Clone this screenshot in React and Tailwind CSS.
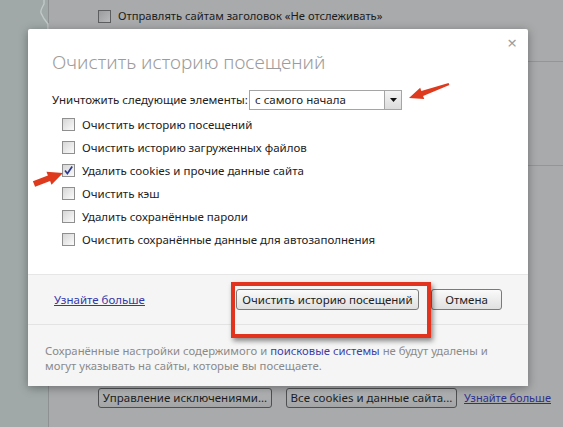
import React from "react";

function Box({ checked, dark }) {
  return (
    <span
      className={`w-[13px] h-[13px] shrink-0 flex items-center justify-center border ${
        dark ? "border-[#5c5e5f] bg-linear-to-br from-[#9a9c9d] to-[#b8babb]" : "border-[#8f8f8f] bg-linear-to-br from-[#d6d6d6] to-[#fbfbfb]"
      }`}
    >
      {checked && (
        <svg width="11" height="11" viewBox="0 0 11 11">
          <path d="M2 5.5 L4.4 8.6 L9.2 1.6" fill="none" stroke="#2c3a8e" strokeWidth="1.7" />
        </svg>
      )}
    </span>
  );
}

const items = [
  { label: "Очистить историю посещений" },
  { label: "Очистить историю загруженных файлов" },
  { label: "Удалить cookies и прочие данные сайта", checked: true },
  { label: "Очистить кэш" },
  { label: "Удалить сохранённые пароли" },
  { label: "Очистить сохранённые данные для автозаполнения" },
];

export default function App() {
  return (
    <div className="relative w-[563px] h-[427px] overflow-hidden bg-[#a8aaab] font-['Noto_Sans',sans-serif] text-[11.5px] text-[#222] whitespace-nowrap">
      {/* page behind the overlay */}
      <div className="flex h-full">
        <div className="w-[48px] shrink-0 bg-[#a0a8a8]" />
        <div className="flex-1 flex flex-col border-l border-[#8d9191] pl-[49px] pr-[4px] pt-[10px] pb-[19px]">
          <div className="flex items-center gap-[7px] h-[13px]">
            <Box dark />
            <span className="text-[#1c1c1c] text-[11.2px]">Отправлять сайтам заголовок «Не отслеживать»</span>
          </div>
          <div className="mt-auto flex items-center h-[20px]">
            <button className="w-[174px] h-[20px] rounded-[3px] border border-[#4e5051] bg-linear-to-b from-[#b3b5b6] to-[#a2a4a5] text-[#1c1c1c]">
              Управление исключениями...
            </button>
            <button className="ml-[14px] w-[171px] h-[20px] rounded-[3px] border border-[#4e5051] bg-linear-to-b from-[#b3b5b6] to-[#a2a4a5] text-[#1c1c1c]">
              Все cookies и данные сайта...
            </button>
            <span className="ml-[7px] underline text-[#2d3190] text-[11px]">Узнайте больше</span>
          </div>
        </div>
      </div>

      {/* left border notch */}
      <svg className="absolute left-0 top-0 pointer-events-none" width="60" height="40" viewBox="0 0 60 40">
        <path d="M44 0 L44 4 Q40 11 41 13 Q43 18 48 24 L48 40" fill="none" stroke="#c3c8c8" strokeWidth="1.4" />
      </svg>
      <div className="absolute right-0 top-[61px] w-[40px] h-px bg-[#939596]" />
      <div className="absolute right-0 top-[165px] w-[40px] h-px bg-[#939596]" />

      {/* dialog */}
      <div className="absolute left-[28px] top-[29px] w-[500px] rounded-[2px] bg-white shadow-[0_2px_10px_rgba(0,0,0,0.35)]">
        <span className="absolute right-[11px] top-[4px] text-[17px] leading-[20px] text-[#9e9e9e]">×</span>
        <div className="pl-[24px] pr-[20px] pt-[20px] pb-[23px]">
          <h1 className="h-[26px] text-[19px] leading-[26px] font-light text-[#9c9c9c]">Очистить историю посещений</h1>
          <div className="mt-[15px] flex items-center h-[20px]">
            <span className="w-[197px]">Уничтожить следующие элементы:</span>
            <div className="w-[153px] h-[20px] flex border border-[#a5a5a5]">
              <span className="flex-1 pl-[5px] leading-[18px]">с самого начала</span>
              <span className="w-[17px] h-full border-l border-[#a5a5a5] bg-linear-to-b from-[#f4f4f4] to-[#dcdcdc] flex items-center justify-center">
                <svg width="7" height="4" viewBox="0 0 7 4">
                  <path d="M0 0 H7 L3.5 4 Z" fill="#111" />
                </svg>
              </span>
            </div>
          </div>
          <div className="mt-[3px] pl-[10px] flex flex-col">
            {items.map((it) => (
              <label key={it.label} className="h-[23px] flex items-center gap-[7px]">
                <Box checked={it.checked} />
                <span>{it.label}</span>
              </label>
            ))}
          </div>
        </div>
        <div className="h-[50px] flex items-center border-t border-[#e6e6e6] bg-[#f5f5f5] pl-[26px] pr-[26px]">
          <span className="underline text-[#3438a8]">Узнайте больше</span>
          <button className="ml-auto w-[183px] h-[21px] rounded-[3px] border border-[#7a7a7a] bg-linear-to-b from-[#fafafa] to-[#e0e0e0] text-[#222]">
            Очистить историю посещений
          </button>
          <button className="ml-[12px] w-[71px] h-[21px] rounded-[3px] border border-[#7a7a7a] bg-linear-to-b from-[#fafafa] to-[#e0e0e0] text-[#222]">
            Отмена
          </button>
        </div>
        <div className="border-t border-[#e3e3e3] bg-[#f5f5f5] pl-[17px] pr-[10px] pt-[18px] pb-[13px] leading-[15px] text-[11.3px] text-[#8a8a8a]">
          <div>
            Сохранённые настройки содержимого и <span className="text-[#3c3fa6]">поисковые системы</span> не будут удалены и
          </div>
          <div>могут указывать на сайты, которые вы посещаете.</div>
        </div>
      </div>

      {/* red highlight frame */}
      <div className="absolute left-[231px] top-[282px] w-[200px] h-[56px] border-[4px] border-[#e1331d] shadow-[2px_3px_5px_rgba(0,0,0,0.45)]" />

      {/* red arrows */}
      <svg className="absolute left-0 top-0 pointer-events-none" width="563" height="427" viewBox="0 0 563 427">
        <polygon points="409,98 424.2,99.1 423.1,95.9 449.4,85.1 448.6,82.9 421.3,90.9 420.2,87.7" fill="#dd3a1e" />
        <polygon points="63,173 51.5,184.8 50.1,181.1 35.1,186.8 32.9,181.2 47.9,175.5 46.5,171.8" fill="#dd3a1e" />
      </svg>
    </div>
  );
}
